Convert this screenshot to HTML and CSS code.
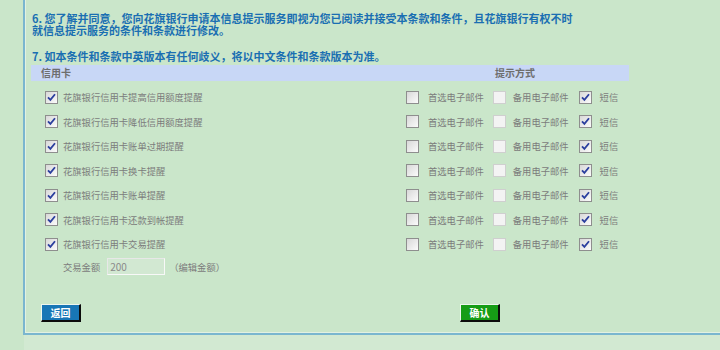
FILE: index.html
```html
<!DOCTYPE html>
<html lang="zh-CN">
<head>
    <meta charset="UTF-8">
    <meta name="viewport" content="width=device-width, initial-scale=1.0">
    <title>信息提示服务</title>
    <link rel="stylesheet" href="styles.css">
</head>
<body>
    <div class="panel">
        <p class="term">6. 您了解并同意，您向花旗银行申请本信息提示服务即视为您已阅读并接受本条款和条件，且花旗银行有权不时<br>就信息提示服务的条件和条款进行修改。</p>
        <p class="term term-last">7. 如本条件和条款中英版本有任何歧义，将以中文条件和条款版本为准。</p>

        <div class="alerts">
            <div class="alerts-head">
                <div class="col-name">信用卡</div>
                <div class="col-way">提示方式</div>
            </div>

            <div class="alert-row">
                <div class="col-name"><span class="cb"><svg viewBox="0 0 11 11"><path d="M2 5.3l2.4 2.6L9 2.2"/></svg></span><span class="txt">花旗银行信用卡提高信用额度提醒</span></div>
                <div class="col-way"><span class="cb"></span><span class="txt mail">首选电子邮件</span><span class="cb cb-off"></span><span class="txt mail2">备用电子邮件</span><span class="cb"><svg viewBox="0 0 11 11"><path d="M2 5.3l2.4 2.6L9 2.2"/></svg></span><span class="txt sms">短信</span></div>
            </div>
            <div class="alert-row">
                <div class="col-name"><span class="cb"><svg viewBox="0 0 11 11"><path d="M2 5.3l2.4 2.6L9 2.2"/></svg></span><span class="txt">花旗银行信用卡降低信用额度提醒</span></div>
                <div class="col-way"><span class="cb"></span><span class="txt mail">首选电子邮件</span><span class="cb cb-off"></span><span class="txt mail2">备用电子邮件</span><span class="cb"><svg viewBox="0 0 11 11"><path d="M2 5.3l2.4 2.6L9 2.2"/></svg></span><span class="txt sms">短信</span></div>
            </div>
            <div class="alert-row">
                <div class="col-name"><span class="cb"><svg viewBox="0 0 11 11"><path d="M2 5.3l2.4 2.6L9 2.2"/></svg></span><span class="txt">花旗银行信用卡账单过期提醒</span></div>
                <div class="col-way"><span class="cb"></span><span class="txt mail">首选电子邮件</span><span class="cb cb-off"></span><span class="txt mail2">备用电子邮件</span><span class="cb"><svg viewBox="0 0 11 11"><path d="M2 5.3l2.4 2.6L9 2.2"/></svg></span><span class="txt sms">短信</span></div>
            </div>
            <div class="alert-row">
                <div class="col-name"><span class="cb"><svg viewBox="0 0 11 11"><path d="M2 5.3l2.4 2.6L9 2.2"/></svg></span><span class="txt">花旗银行信用卡换卡提醒</span></div>
                <div class="col-way"><span class="cb"></span><span class="txt mail">首选电子邮件</span><span class="cb cb-off"></span><span class="txt mail2">备用电子邮件</span><span class="cb"><svg viewBox="0 0 11 11"><path d="M2 5.3l2.4 2.6L9 2.2"/></svg></span><span class="txt sms">短信</span></div>
            </div>
            <div class="alert-row">
                <div class="col-name"><span class="cb"><svg viewBox="0 0 11 11"><path d="M2 5.3l2.4 2.6L9 2.2"/></svg></span><span class="txt">花旗银行信用卡账单提醒</span></div>
                <div class="col-way"><span class="cb"></span><span class="txt mail">首选电子邮件</span><span class="cb cb-off"></span><span class="txt mail2">备用电子邮件</span><span class="cb"><svg viewBox="0 0 11 11"><path d="M2 5.3l2.4 2.6L9 2.2"/></svg></span><span class="txt sms">短信</span></div>
            </div>
            <div class="alert-row">
                <div class="col-name"><span class="cb"><svg viewBox="0 0 11 11"><path d="M2 5.3l2.4 2.6L9 2.2"/></svg></span><span class="txt">花旗银行信用卡还款到帐提醒</span></div>
                <div class="col-way"><span class="cb"></span><span class="txt mail">首选电子邮件</span><span class="cb cb-off"></span><span class="txt mail2">备用电子邮件</span><span class="cb"><svg viewBox="0 0 11 11"><path d="M2 5.3l2.4 2.6L9 2.2"/></svg></span><span class="txt sms">短信</span></div>
            </div>
            <div class="alert-row">
                <div class="col-name"><span class="cb"><svg viewBox="0 0 11 11"><path d="M2 5.3l2.4 2.6L9 2.2"/></svg></span><span class="txt">花旗银行信用卡交易提醒</span></div>
                <div class="col-way"><span class="cb"></span><span class="txt mail">首选电子邮件</span><span class="cb cb-off"></span><span class="txt mail2">备用电子邮件</span><span class="cb"><svg viewBox="0 0 11 11"><path d="M2 5.3l2.4 2.6L9 2.2"/></svg></span><span class="txt sms">短信</span></div>
            </div>

            <div class="amount-row">
                <span class="txt">交易金额</span>
                <input class="amount" type="text" value="200">
                <span class="txt">（编辑金额）</span>
            </div>
        </div>

        <div class="actions">
            <button class="btn btn-back" type="button">返回</button>
            <button class="btn btn-ok" type="button">确认</button>
        </div>
    </div>
    <div class="foot"></div>
</body>
</html>
```

FILE: styles.css
```css
body {
    margin: 0;
    background-color: #cae6ca;
    font-family: "Noto Sans CJK SC", "Liberation Sans", sans-serif;
}

.panel {
    margin-left: 23px;
    padding: 12px 0 11px 6px;
    border-left: 2px solid #7ab6cf;
    border-bottom: 2px solid #7ab6cf;
    box-shadow: inset 1px 0 0 #e2f1e2, inset 0 -1px 0 #e2f1e2;
}

.term {
    margin: 0 0 0 1px;
    font-size: 11px;
    line-height: 12px;
    font-weight: bold;
    color: #1a6fb2;
    white-space: nowrap;
}

.term-last {
    margin-top: 14px;
}

.alerts {
    width: 598px;
    margin-top: 3px;
}

.alerts-head {
    display: flex;
    height: 16px;
    background-color: #c8d7f6;
    font-size: 10px;
    line-height: 16px;
    font-weight: bold;
    color: #6e6e6e;
    margin-bottom: 4px;
}

.alerts-head .col-name {
    padding-left: 10px;
}

.col-name {
    width: 370px;
    box-sizing: border-box;
    display: flex;
    align-items: center;
}

.col-way {
    flex: 1;
    display: flex;
    align-items: center;
}

.alerts-head .col-way {
    justify-content: center;
}

.alert-row {
    display: flex;
    height: 24.5px;
    align-items: center;
}

.alert-row .col-name {
    padding-left: 14px;
}

.alert-row .col-way {
    padding-left: 5px;
}

.txt {
    font-size: 9.3px;
    line-height: 12px;
    color: #7c7c7c;
    white-space: nowrap;
}

.col-name .txt {
    margin-left: 5px;
}

.txt.mail {
    margin-left: 9px;
    margin-right: 9px;
}

.txt.mail2 {
    margin-left: 7px;
    margin-right: 10px;
}

.txt.sms {
    margin-left: 8px;
}

.cb {
    width: 13px;
    height: 13px;
    box-sizing: border-box;
    border: 1px solid #8e8e8e;
    background: linear-gradient(135deg, #d8d8d8, #fbfbfb);
    flex: none;
}

.cb svg {
    display: block;
    width: 11px;
    height: 11px;
}

.cb path {
    fill: none;
    stroke: #2b3f9e;
    stroke-width: 1.8;
}

.cb-off {
    border-color: #cfcfcf;
    background: #f3f3f3;
}

.amount-row {
    display: flex;
    align-items: center;
    height: 20px;
    padding-left: 32px;
}

.amount {
    width: 58px;
    height: 17px;
    box-sizing: border-box;
    margin: 0 4px 0 7px;
    padding: 0 2px;
    border: 1px solid #e8e8e8;
    border-right-color: #f8f8f8;
    border-bottom-color: #f8f8f8;
    background-color: #d2e8d2;
    font-family: "Noto Sans CJK SC", "Liberation Sans", sans-serif;
    font-size: 10px;
    color: #8a8a8a;
}

.actions {
    display: flex;
    margin-top: 27.5px;
    padding-left: 10px;
}

.btn {
    width: 40px;
    height: 18px;
    padding: 0;
    border-top: 1px solid #eef6ee;
    border-left: 1px solid #eef6ee;
    border-right: 2px solid #0c0c0c;
    border-bottom: 2px solid #0c0c0c;
    color: #fff;
    font-family: "Noto Sans CJK SC", "Liberation Sans", sans-serif;
    font-size: 10px;
    font-weight: bold;
    line-height: 14px;
    cursor: pointer;
}

.btn-back {
    background-color: #1876b6;
}

.btn-ok {
    margin-left: 379px;
    background-color: #169d16;
}

.foot {
    margin-left: 24px;
    height: 15px;
    background-color: #d2e9d2;
}
```
